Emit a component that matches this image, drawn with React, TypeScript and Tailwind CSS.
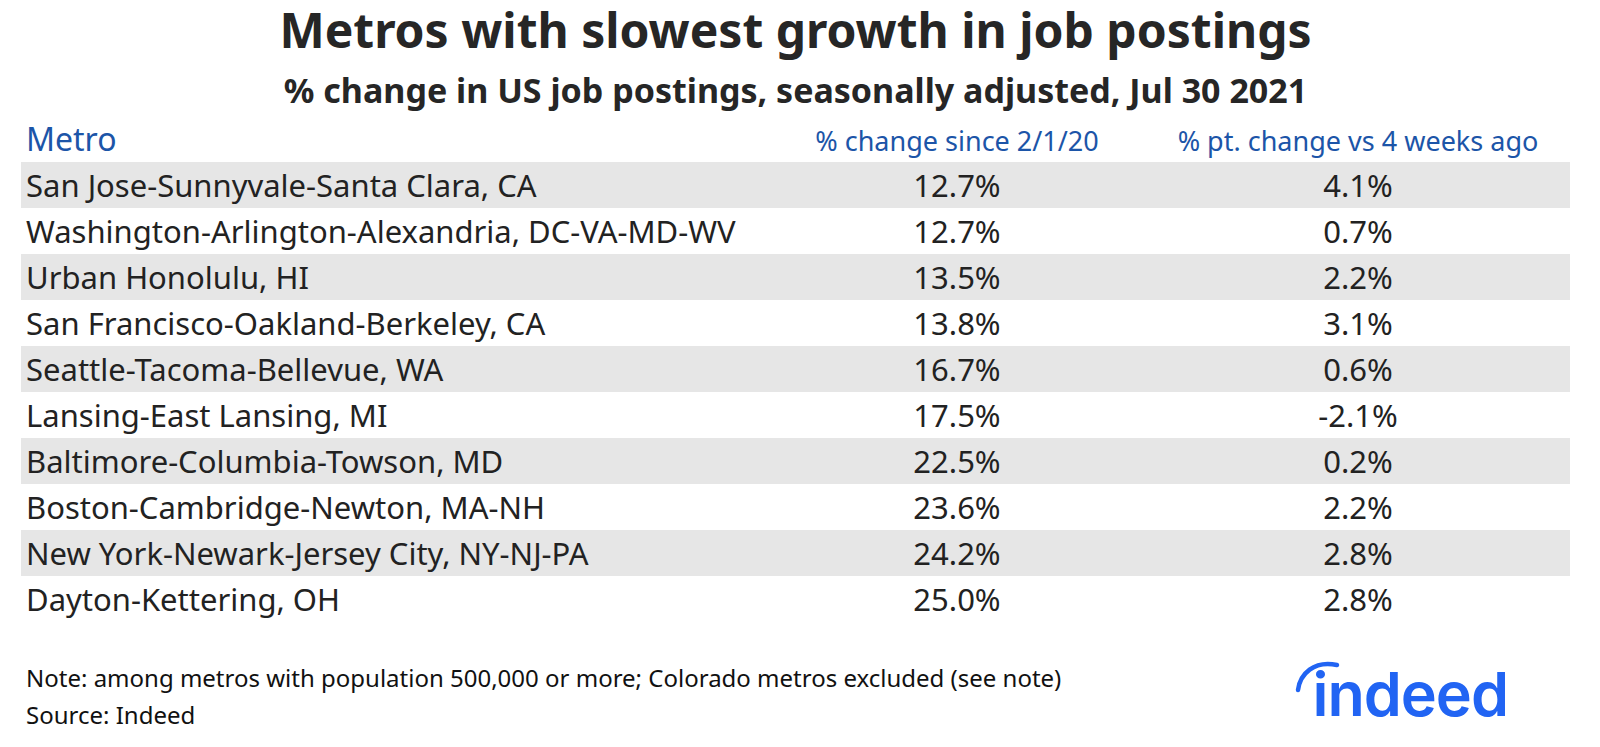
import React from 'react';

type Row = {metro: string; since: string; vs4w: string};

const rows: Row[] = [
    {metro: 'San Jose-Sunnyvale-Santa Clara, CA', since: '12.7%', vs4w: '4.1%'},
    {metro: 'Washington-Arlington-Alexandria, DC-VA-MD-WV', since: '12.7%', vs4w: '0.7%'},
    {metro: 'Urban Honolulu, HI', since: '13.5%', vs4w: '2.2%'},
    {metro: 'San Francisco-Oakland-Berkeley, CA', since: '13.8%', vs4w: '3.1%'},
    {metro: 'Seattle-Tacoma-Bellevue, WA', since: '16.7%', vs4w: '0.6%'},
    {metro: 'Lansing-East Lansing, MI', since: '17.5%', vs4w: '-2.1%'},
    {metro: 'Baltimore-Columbia-Towson, MD', since: '22.5%', vs4w: '0.2%'},
    {metro: 'Boston-Cambridge-Newton, MA-NH', since: '23.6%', vs4w: '2.2%'},
    {metro: 'New York-Newark-Jersey City, NY-NJ-PA', since: '24.2%', vs4w: '2.8%'},
    {metro: 'Dayton-Kettering, OH', since: '25.0%', vs4w: '2.8%'},
];

function IndeedLogo() {
    return (
        <div className="relative mr-[62px] mt-[5px]">
            {/* the swoosh over the i */}
            <svg
                className="absolute left-[-20px] top-[-10px]"
                width="60"
                height="50"
                viewBox="0 0 60 50"
                fill="none"
            >
                <path d="M6 36 C8 20 22 6 45 11" stroke="#2164f3" strokeWidth="4.5" strokeLinecap="round" />
            </svg>
            <span className="block font-['Inter',sans-serif] text-[61px] leading-[61px] font-semibold tracking-[-1px] text-[#2164f3]">
                indeed
            </span>
        </div>
    );
}

export default function App() {
    return (
        <div className="w-[1600px] h-[747px] bg-white font-['Noto_Sans',sans-serif] text-[#222]">
            <div className="ml-[21px] w-[1549px] pt-[2px]">
                <h1 className="text-center text-[48px] leading-[56px] font-bold text-[#262626]">
                    Metros with slowest growth in job postings
                </h1>
                <h2 className="mt-[12px] text-center text-[34px] leading-[40px] font-bold text-[#262626]">
                    % change in US job postings, seasonally adjusted, Jul 30 2021
                </h2>

                <div className="mt-[9px] grid grid-cols-[747px_378px_424px] items-baseline text-[#1c55a8]">
                    <div className="pl-[5px] text-[32px] leading-[40px]">Metro</div>
                    <div className="text-center text-[27px] leading-[40px]">% change since 2/1/20</div>
                    <div className="text-center text-[27px] leading-[40px]">% pt. change vs 4 weeks ago</div>
                </div>

                <div className="mt-[1px] flex flex-col">
                    {rows.map((row, i) => (
                        <div
                            key={row.metro}
                            className={`grid grid-cols-[747px_378px_424px] h-[46px] text-[31px] leading-[46px] ${
                                i % 2 === 0 ? 'bg-[#e6e6e6]' : 'bg-white'
                            }`}
                        >
                            <div className="pl-[5px] whitespace-nowrap">{row.metro}</div>
                            <div className="text-center">{row.since}</div>
                            <div className="text-center">{row.vs4w}</div>
                        </div>
                    ))}
                </div>

                <div className="mt-[37px] flex justify-between items-start">
                    <div className="pl-[5px] text-[24px] leading-[37px] text-[#111]">
                        <div>Note: among metros with population 500,000 or more; Colorado metros excluded (see note)</div>
                        <div>Source: Indeed</div>
                    </div>
                    <IndeedLogo />
                </div>
            </div>
        </div>
    );
}
